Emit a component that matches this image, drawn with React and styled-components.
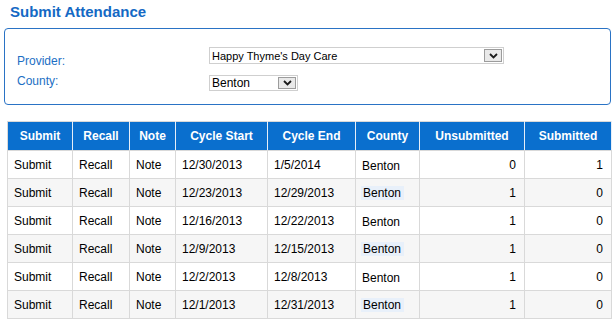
import React from 'react';
import styled, { createGlobalStyle } from 'styled-components';

const GlobalStyle = createGlobalStyle`
  body {
    margin: 0;
    background: #fff;
    font-family: "Liberation Sans", Arial, sans-serif;
    font-size: 12px;
    color: #000;
  }
`;

const Page = styled.div`
  padding: 3px 3px 0 4px;
  width: 607px;
`;

const Title = styled.h1`
  margin: 0 0 7px 6px;
  font-size: 15px;
  line-height: 18px;
  font-weight: bold;
  color: #1469c4;
`;

const FilterBox = styled.div`
  border: 1px solid #2a73c5;
  border-radius: 4px;
  padding: 17px 0 12px 12px;
  display: grid;
  grid-template-columns: 192px auto;
  grid-template-rows: 22px 24px;
`;

const Label = styled.div`
  color: #1c6fc4;
  font-size: 12px;
  line-height: 14px;
  text-align: left;
  align-self: ${({ $align }) => $align || 'start'};
  margin-top: ${({ $top }) => $top || 0}px;
`;

const SelectBox = styled.div`
  display: flex;
  align-items: center;
  box-sizing: border-box;
  width: ${({ $w }) => $w}px;
  height: ${({ $h }) => $h}px;
  margin-top: ${({ $top }) => $top || 0}px;
  border: 1px solid #cfcfcf;
  background: #fff;
  font-size: ${({ $fs }) => $fs}px;
  color: #000;
`;

const SelectText = styled.span`
  flex: 1;
  padding-left: 2px;
  white-space: nowrap;
  overflow: hidden;
`;

const DropButton = styled.span`
  display: flex;
  align-items: center;
  justify-content: center;
  box-sizing: border-box;
  width: 18px;
  height: ${({ $h }) => $h}px;
  margin-right: 1px;
  border: 1px solid #9c9c9c;
  background: #e9e9e9;
`;

const Chevron = () => (
  <svg width="9" height="6" viewBox="0 0 9 6">
    <path d="M1 1 L4.5 4.5 L8 1" fill="none" stroke="#1a1a1a" strokeWidth="1.8" />
  </svg>
);

const Select = ({ value, w, h, fs, top }) => (
  <SelectBox $w={w} $h={h} $fs={fs} $top={top}>
    <SelectText>{value}</SelectText>
    <DropButton $h={h - 4}>
      <Chevron />
    </DropButton>
  </SelectBox>
);

const Table = styled.table`
  margin: 16px 0 0 3px;
  width: 604px;
  border-collapse: collapse;
  table-layout: fixed;
  border: 1px solid #d9d9d9;
`;

const Th = styled.th`
  height: 28px;
  padding: 0;
  background: #0a6fce;
  color: #fff;
  font-weight: bold;
  font-size: 12px;
  text-align: center;
  border-right: 1px solid #e6eef8;
  border-bottom: 1px solid #d9d9d9;
`;

const Row = styled.tr`
  height: 28px;
  background: ${({ $alt }) => ($alt ? '#f6f6f6' : '#fff')};
`;

const Td = styled.td`
  padding: ${({ $right }) => ($right ? '0 8px 0 0' : '0 0 0 6px')};
  text-align: ${({ $right }) => ($right ? 'right' : 'left')};
  border: 1px solid #d9d9d9;
  white-space: nowrap;
`;

const CountyText = styled.span`
  display: inline-block;
  line-height: 14px;
  padding: ${({ $alt }) => ($alt ? '0 3px 0 2px' : '2px 0 0 0')};
  margin-left: ${({ $alt }) => ($alt ? '-1px' : '0')};
  background: ${({ $alt }) => ($alt ? '#e8f0fa' : 'transparent')};
`;

const columns = [
  { title: 'Submit', width: 65 },
  { title: 'Recall', width: 57 },
  { title: 'Note', width: 46 },
  { title: 'Cycle Start', width: 92 },
  { title: 'Cycle End', width: 88 },
  { title: 'County', width: 64 },
  { title: 'Unsubmitted', width: 105 },
  { title: 'Submitted', width: 87 },
];

const rows = [
  { start: '12/30/2013', end: '1/5/2014', unsub: 0, sub: 1 },
  { start: '12/23/2013', end: '12/29/2013', unsub: 1, sub: 0 },
  { start: '12/16/2013', end: '12/22/2013', unsub: 1, sub: 0 },
  { start: '12/9/2013', end: '12/15/2013', unsub: 1, sub: 0 },
  { start: '12/2/2013', end: '12/8/2013', unsub: 1, sub: 0 },
  { start: '12/1/2013', end: '12/31/2013', unsub: 1, sub: 0 },
];

export default function App() {
  return (
    <Page>
      <GlobalStyle />
      <Title>Submit Attendance</Title>
      <FilterBox>
        <Label $align="end">Provider:</Label>
        <Select value="Happy Thyme's Day Care" w={295} h={17} fs={11} top={1} />
        <Label $top={6}>County:</Label>
        <Select value="Benton" w={89} h={16} fs={12} top={7} />
      </FilterBox>
      <Table>
        <colgroup>
          {columns.map((c) => (
            <col key={c.title} style={{ width: c.width }} />
          ))}
        </colgroup>
        <thead>
          <tr>
            {columns.map((c) => (
              <Th key={c.title}>{c.title}</Th>
            ))}
          </tr>
        </thead>
        <tbody>
          {rows.map((r, i) => {
            const alt = i % 2 === 1;
            return (
              <Row key={r.start} $alt={alt}>
                <Td>Submit</Td>
                <Td>Recall</Td>
                <Td>Note</Td>
                <Td>{r.start}</Td>
                <Td>{r.end}</Td>
                <Td>
                  <CountyText $alt={alt}>Benton</CountyText>
                </Td>
                <Td $right>{r.unsub}</Td>
                <Td $right>{r.sub}</Td>
              </Row>
            );
          })}
        </tbody>
      </Table>
    </Page>
  );
}
